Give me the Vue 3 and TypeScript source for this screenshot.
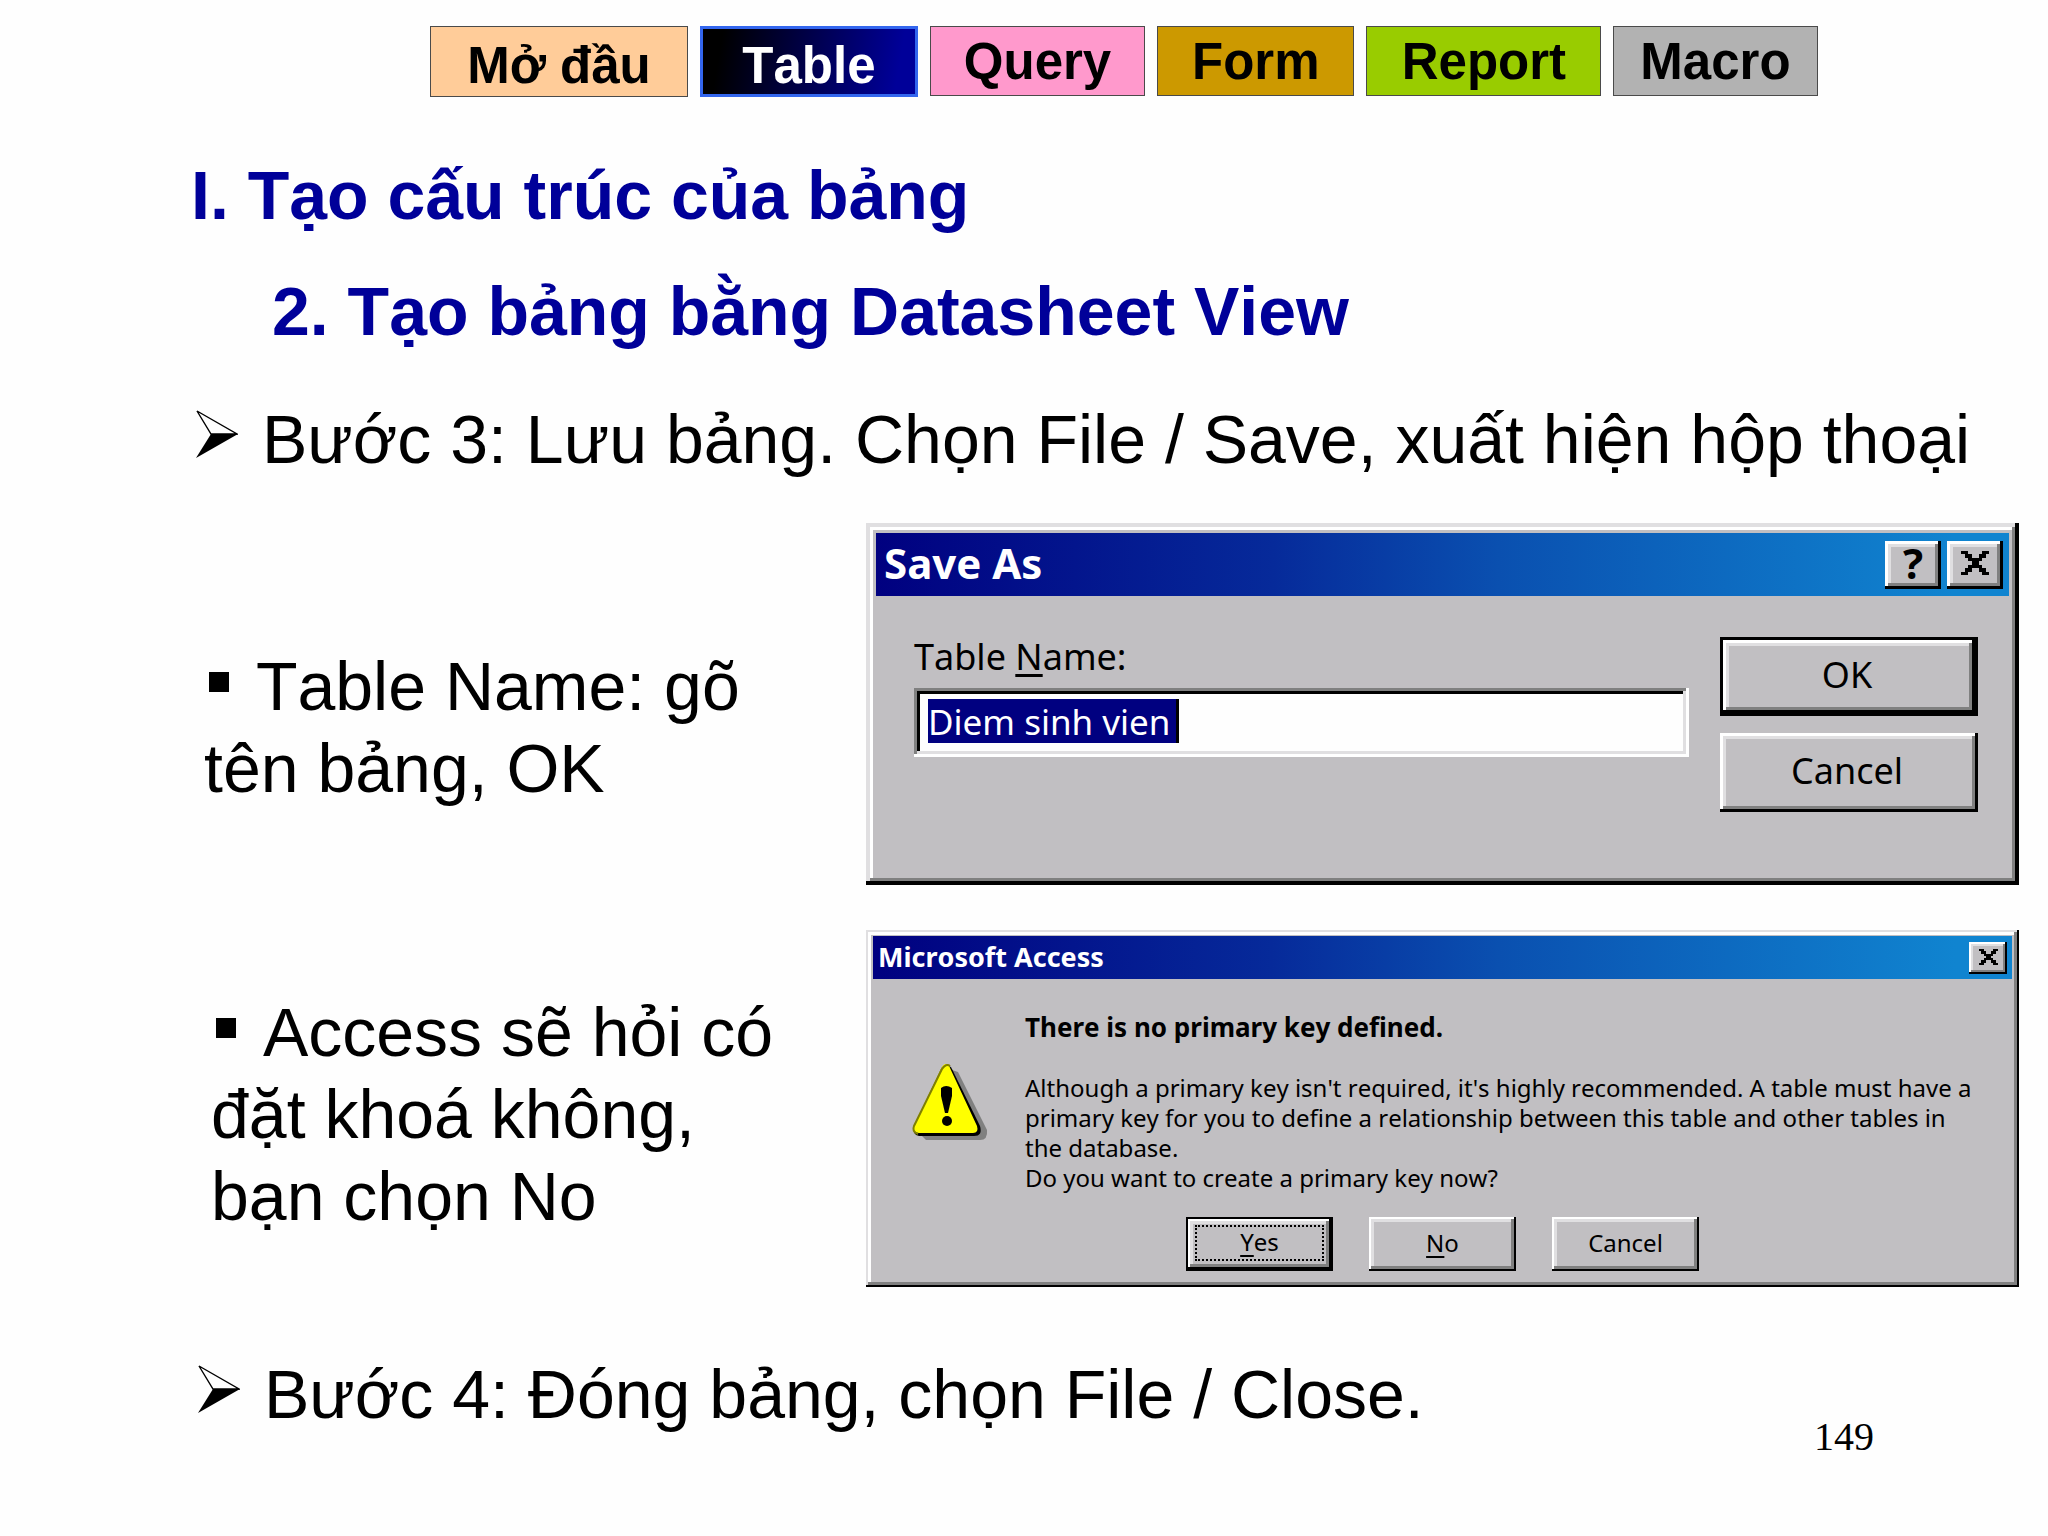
<script setup lang="ts">
import { ref } from 'vue'

interface Tab {
  id: string
  label: string
  grow: number
  tall?: boolean
}

const tabs: Tab[] = [
  { id: 'intro', label: 'Mở đầu', grow: 258, tall: true },
  { id: 'table', label: 'Table', grow: 218, tall: true },
  { id: 'query', label: 'Query', grow: 215 },
  { id: 'form', label: 'Form', grow: 197 },
  { id: 'report', label: 'Report', grow: 235 },
  { id: 'macro', label: 'Macro', grow: 204 },
]

const tableName = ref('Diem sinh vien')
</script>

<template>
  <div class="slide">
    <nav class="tabs">
      <a
        v-for="tab in tabs"
        :key="tab.id"
        :href="'#' + tab.id"
        :class="['tab', tab.id, { tall: tab.tall }]"
        :style="{ flexGrow: tab.grow }"
      >{{ tab.label }}</a>
    </nav>

    <main class="content">
      <h1>I. Tạo cấu trúc của bảng</h1>
      <h2>2. Tạo bảng bằng Datasheet View</h2>

      <p class="step">
        <svg class="arrow" viewBox="0 0 42 48" aria-hidden="true">
          <path d="M1 1 L41 24 H15 Z" fill="none" stroke="#000" stroke-width="1.4" />
          <path d="M15 24 H42 L0 48 Z" />
        </svg>
        Bước 3: Lưu bảng. Chọn File / Save, xuất hiện hộp thoại
      </p>

      <div class="rows">
        <p class="note first"><span class="square"></span> Table Name: gõ tên bảng, OK</p>

        <section class="dialog save" aria-label="Save As">
          <header class="titlebar">
            <span class="title">Save As</span>
            <button type="button" class="sysbtn" aria-label="Help">?</button>
            <button type="button" class="sysbtn" aria-label="Close">
              <svg class="cross" viewBox="0 0 8 7" preserveAspectRatio="none" shape-rendering="crispEdges" aria-hidden="true">
                <path d="M0 0h2v1h1v1h2v-1h1v-1h2v1h-1v1h-1v1h-1v1h1v1h1v1h1v1h-2v-1h-1v-1h-2v1h-1v1h-2v-1h1v-1h1v-1h1v-1h-1v-1h-1v-1h-1z" />
              </svg>
            </button>
          </header>
          <form class="save-body" @submit.prevent>
            <div class="field">
              <label for="table-name">Table <u>N</u>ame:</label>
              <div class="sunken">
                <input id="table-name" v-model="tableName" type="text" spellcheck="false" />
              </div>
            </div>
            <div class="stack">
              <button type="submit" class="push default">OK</button>
              <button type="button" class="push">Cancel</button>
            </div>
          </form>
        </section>

        <p class="note second"><span class="square"></span> Access sẽ hỏi có đặt khoá không, bạn chọn No</p>

        <section class="dialog alert" aria-label="Microsoft Access">
          <header class="titlebar">
            <span class="title">Microsoft Access</span>
            <button type="button" class="sysbtn" aria-label="Close">
              <svg class="cross" viewBox="0 0 8 7" preserveAspectRatio="none" shape-rendering="crispEdges" aria-hidden="true">
                <path d="M0 0h2v1h1v1h2v-1h1v-1h2v1h-1v1h-1v1h-1v1h1v1h1v1h1v1h-2v-1h-1v-1h-2v1h-1v1h-2v-1h1v-1h1v-1h1v-1h-1v-1h-1v-1h-1z" />
              </svg>
            </button>
          </header>
          <div class="alert-body">
            <svg class="warning" viewBox="0 0 76 76" aria-hidden="true">
              <path d="M40 6 L46 8 L75 66 Q76 76 68 76 H14 L10 72 Z" fill="#808080" />
              <path d="M34 1 Q38 1 40 5 L68 62 Q71 72 62 72 H7 Q0 71 2 62 L29 5 Q31 1 34 1 Z" fill="#000" />
              <path d="M34 0 Q37 0 38 4 L65 62 Q67 69 61 69 H7 Q0 69 2 62 L29 5 Q31 0 34 0 Z" fill="#ff0" />
              <path d="M38 2 Q34 -1 30 5 L2 62 Q0 68 6 70" fill="none" stroke="#808000" stroke-width="2" />
              <path d="M29 24 Q34 20 40 24 V32 L36 49 H33 L29 32 Z" />
              <circle cx="35" cy="57" r="5" />
            </svg>
            <div class="message">
              <h3>There is no primary key defined.</h3>
              <p>Although a primary key isn't required, it's highly recommended. A table must have a primary key for you to define a relationship between this table and other tables in the database.<br />Do you want to create a primary key now?</p>
            </div>
          </div>
          <div class="actions">
            <button type="button" class="push default"><span class="focus"><u>Y</u>es</span></button>
            <button type="button" class="push"><span><u>N</u>o</span></button>
            <button type="button" class="push">Cancel</button>
          </div>
        </section>
      </div>

      <footer class="last">
        <p class="step">
          <svg class="arrow" viewBox="0 0 42 48" aria-hidden="true">
            <path d="M1 1 L41 24 H15 Z" fill="none" stroke="#000" stroke-width="1.4" />
            <path d="M15 24 H42 L0 48 Z" />
          </svg>
          Bước 4: Đóng bảng, chọn File / Close.
        </p>
        <span class="page-number">149</span>
      </footer>
    </main>
  </div>
</template>

<style>
body {
  margin: 0;
  background: #fefefe;
}
</style>

<style scoped>
.slide {
  box-sizing: border-box;
  padding-top: 26px;
  color: #000;
  font-family: "Liberation Sans", Arial, sans-serif;
  font-size: 68px;
  font-kerning: none;
  line-height: 82px;
}

h1, h2, h3, p {
  margin: 0;
}

.tabs {
  display: flex;
  align-items: flex-start;
  gap: 12px;
  height: 71px;
  margin-left: 21%;
  margin-right: 11.25%;
}

.tab {
  flex: 1 1 0;
  box-sizing: border-box;
  height: 70px;
  border: 1px solid #4a4a4a;
  color: #000;
  font-size: 51px;
  font-weight: bold;
  line-height: 69px;
  text-align: center;
  text-decoration: none;
  white-space: nowrap;
}

.tab.tall {
  height: 71px;
  line-height: 77px;
}

.intro { background: #ffcc99; }
.tab.table {
  border-color: #3366ee;
  background: linear-gradient(100deg, #000 10%, #000099 90%);
  box-shadow: inset 0 0 0 2px #3366ee;
  color: #fff;
}
.query { background: #ff99cc; }
.form { background: #cc9900; }
.report { background: #99cc00; }
.macro { background: #b2b2b2; }

.content {
  padding: 57px 29px 0 191px;
}

h1, h2 {
  color: #000099;
  font-size: 68px;
  font-weight: bold;
}

h2 {
  margin-top: 34px;
  padding-left: 81px;
}

.step {
  margin-top: 46px;
  white-space: nowrap;
}

.arrow {
  width: 42px;
  height: 48px;
  margin: 0 5px;
  vertical-align: 5px;
}

.rows {
  display: grid;
  grid-template-columns: 675fr 1153fr;
  row-gap: 45px;
  align-items: start;
  margin-top: 43px;
}

.note {
  padding-right: 76px;
}

.first {
  padding-top: 122px;
  padding-left: 13px;
}

.second {
  padding-top: 61px;
  padding-left: 20px;
}

.square {
  display: inline-block;
  width: 20px;
  height: 20px;
  margin: 0 8px 0 5px;
  background: #000;
  vertical-align: 18px;
}

/* Classic desktop dialogs */
.dialog {
  --edge: 4px;
  --bevel: 7px;
  box-sizing: border-box;
  background: #c1bfc2;
  box-shadow:
    inset calc(-1 * var(--edge)) calc(-1 * var(--edge)) #000,
    inset var(--edge) var(--edge) #e0dfe1,
    inset calc(-1 * var(--bevel)) calc(-1 * var(--bevel)) #808080,
    inset var(--bevel) var(--bevel) #fff;
  font-family: "Noto Sans", "Open Sans", sans-serif;
}

.save {
  padding: 10px;
  font-size: 36px;
}

.alert {
  --edge: 2px;
  --bevel: 5px;
  padding: 6px 7px 16px;
  font-size: 24px;
}

.titlebar {
  display: flex;
  align-items: center;
  gap: 6px;
  background: linear-gradient(90deg, #000080, #062a9a 35%, #0a50b0 55%, #1084d0 95%);
  color: #fff;
  font-weight: bold;
}

.save .titlebar {
  height: 63px;
  padding: 0 6px 0 8px;
  font-size: 42px;
}

.alert .titlebar {
  height: 43px;
  padding: 0 5px;
  font-size: 27px;
}

.title {
  flex: 1;
  padding-bottom: 4px;
  line-height: 40px;
}

.alert .title {
  padding-bottom: 2px;
}

button {
  padding: 0;
  border: 0;
  background: #c1bfc2;
  color: #000;
  font: inherit;
  font-kerning: none;
}

.sysbtn {
  --edge: 3px;
  --bevel: 6px;
  display: flex;
  align-items: center;
  justify-content: center;
  width: 56px;
  height: 48px;
  padding-bottom: 4px;
  box-shadow:
    inset calc(-1 * var(--edge)) calc(-1 * var(--edge)) #000,
    inset var(--edge) var(--edge) #fff,
    inset calc(-1 * var(--bevel)) calc(-1 * var(--bevel)) #808080,
    inset var(--bevel) var(--bevel) #e0dfe1;
  line-height: 40px;
}

.cross {
  width: 28px;
  height: 24px;
}

.alert .sysbtn {
  --edge: 2px;
  --bevel: 4px;
  width: 38px;
  height: 32px;
  padding-bottom: 2px;
}

.alert .cross {
  width: 19px;
  height: 16px;
}

.push {
  --edge: 3px;
  --bevel: 6px;
  box-sizing: border-box;
  box-shadow:
    inset calc(-1 * var(--edge)) calc(-1 * var(--edge)) #000,
    inset var(--edge) var(--edge) #fff,
    inset calc(-1 * var(--bevel)) calc(-1 * var(--bevel)) #808080,
    inset var(--bevel) var(--bevel) #e0dfe1;
  line-height: 30px;
}

.push.default {
  border: var(--edge) solid #000;
}

u {
  text-decoration-thickness: 3px;
  text-underline-offset: 4px;
}

.save-body {
  display: flex;
  gap: 31px;
  padding: 41px 31px 63px 38px;
}

.field {
  flex: 1;
}

.field label {
  display: block;
  margin-bottom: 11px;
  line-height: 40px;
}

.sunken {
  box-sizing: border-box;
  height: 69px;
  padding: 11px 14px;
  background: #fefefe;
  box-shadow:
    inset -3px -3px #fff,
    inset 3px 3px #808080,
    inset -6px -6px #e0dfe1,
    inset 6px 6px #000;
  line-height: 44px;
}

.sunken input {
  display: block;
  box-sizing: border-box;
  width: 251px;
  height: 44px;
  padding: 2px 0 0;
  border: 0;
  border-right: 3px solid #000;
  border-radius: 0;
  outline: 0;
  background: #000080;
  color: #fff;
  font: inherit;
  font-size: 35px;
}

.stack {
  display: flex;
  flex-direction: column;
  gap: 17px;
  width: 258px;
}

.stack .push {
  height: 79px;
  padding: 0 4px 4px 0;
}

.alert-body {
  display: flex;
  gap: 37px;
  padding: 33px 30px 0 39px;
}

.warning {
  flex: none;
  width: 76px;
  height: 76px;
  margin-top: 52px;
}

.message {
  flex: 1;
  line-height: 30px;
}

h3 {
  margin-bottom: 31px;
  font-size: 26px;
}

.actions {
  display: flex;
  justify-content: center;
  gap: 36px;
  margin-top: 24px;
}

.actions .push {
  --edge: 2px;
  --bevel: 5px;
  width: 147px;
  height: 54px;
  padding-bottom: 2px;
}

.focus {
  display: block;
  box-sizing: border-box;
  height: 36px;
  margin: 0 7px;
  border: 2px dotted #000;
}

.actions u {
  text-decoration-thickness: 2px;
}

.last {
  display: flex;
  align-items: flex-start;
  justify-content: space-between;
  margin-top: 66px;
}

.last .step {
  margin-top: 0;
  padding-left: 2px;
}

.page-number {
  margin: 61px 145px 0 0;
  font-family: "Liberation Serif", "Times New Roman", serif;
  font-size: 40px;
  line-height: 46px;
}
</style>
